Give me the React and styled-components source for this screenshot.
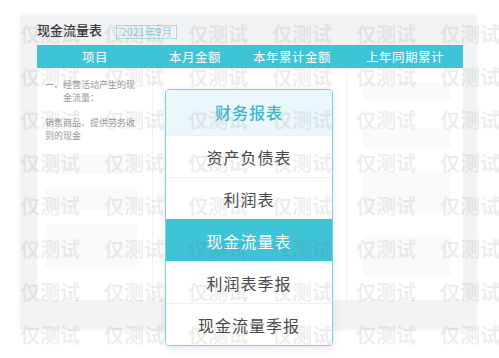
import React from "react";
import styled, { createGlobalStyle } from "styled-components";

const GlobalStyle = createGlobalStyle`
  html, body {
    margin: 0;
    padding: 0;
    background: #ffffff;
  }
  body {
    font-family: "Noto Sans CJK SC", "Noto Sans", sans-serif;
  }
`;

const columns = ["项目", "本月金额", "本年累计金额", "上年同期累计"];
const colWidths = [116, 84, 110, 116];
const menuItems = ["资产负债表", "利润表", "现金流量表", "利润表季报", "现金流量季报"];

const App = () => (
  <Stage>
    <GlobalStyle />
    <Panel>
      <TitleRow>
        <Title>现金流量表</Title>
        <DateBox>2021年9月</DateBox>
      </TitleRow>
      <HeaderBar>
        {columns.map((c, i) => (
          <HeaderCell key={c} $w={colWidths[i]}>
            {c}
          </HeaderCell>
        ))}
      </HeaderBar>
      <Body>
        <Column $w={colWidths[0]}>
          <RowText>一、经营活动产生的现金流量：</RowText>
          <RowText $plain>销售商品、提供劳务收到的现金</RowText>
          <Placeholder $h={20} $mt={12} />
          <Placeholder $h={22} $mt={14} />
          <Placeholder $h={44} $mt={14} />
        </Column>
        <Column $w={colWidths[1]} />
        <Column $w={colWidths[2]} />
        <Column $w={colWidths[3]} $pad="14px 12px 0 16px">
          <Placeholder $h={18} $mt={0} />
          <Placeholder $h={20} $mt={28} />
          <Placeholder $h={40} $mt={24} />
          <Placeholder $h={40} $mt={24} />
        </Column>
      </Body>
    </Panel>

    <Menu>
      <MenuHeader>财务报表</MenuHeader>
      {menuItems.map((m) => (
        <MenuItem key={m} $active={m === "现金流量表"}>
          {m}
        </MenuItem>
      ))}
    </Menu>

    <Watermark>
      {Array.from({ length: 8 }).map((_, r) => (
        <MarkRow key={r}>
          {Array.from({ length: 6 }).map((__, c) => (
            <Mark key={c}>仅测试</Mark>
          ))}
        </MarkRow>
      ))}
    </Watermark>
  </Stage>
);

export default App;

const Stage = styled.div`
  position: relative;
  width: 499px;
  height: 358px;
  overflow: hidden;
  background: #ffffff;
`;

const Panel = styled.div`
  box-sizing: border-box;
  margin: 15px 0 0 20px;
  width: 457px;
  height: 315px;
  padding: 7px 14px 30px 17px;
  background: #f1f3f5;
  display: flex;
  flex-direction: column;
  box-shadow: 0 0 6px rgba(0, 0, 0, 0.04);
`;

const TitleRow = styled.div`
  height: 23px;
  display: flex;
  align-items: flex-start;
  gap: 14px;
`;

const Title = styled.div`
  font-size: 13px;
  line-height: 16px;
  font-weight: 500;
  color: #3a3a3a;
`;

const DateBox = styled.div`
  margin-top: 3px;
  box-sizing: border-box;
  width: 61px;
  height: 14px;
  border: 1px solid #a9dbe6;
  font-size: 10px;
  line-height: 12px;
  color: #8ccbdb;
  text-align: center;
  letter-spacing: 0.5px;
`;

const HeaderBar = styled.div`
  height: 23px;
  background: #3ec3d7;
  display: flex;
`;

const HeaderCell = styled.div`
  width: ${(p) => p.$w}px;
  color: #ffffff;
  font-size: 12.5px;
  line-height: 23px;
  text-align: center;
  letter-spacing: 0.5px;
`;

const Body = styled.div`
  flex: 1;
  background: #ffffff;
  display: flex;
`;

const Column = styled.div`
  box-sizing: border-box;
  width: ${(p) => p.$w}px;
  padding: ${(p) => p.$pad || "10px 15px 0 8px"};
  border-right: 1px solid #f1f2f4;
  display: flex;
  flex-direction: column;
  &:last-child {
    border-right: none;
  }
`;

const RowText = styled.div`
  font-size: 9px;
  line-height: 13px;
  color: #999999;
  padding-left: ${(p) => (p.$plain ? 0 : 18)}px;
  text-indent: ${(p) => (p.$plain ? 0 : -18)}px;
  margin-bottom: ${(p) => (p.$plain ? 0 : 12)}px;
`;

const Placeholder = styled.div`
  height: ${(p) => p.$h}px;
  margin-top: ${(p) => p.$mt}px;
  background: #fafafb;
`;

const Menu = styled.div`
  position: absolute;
  left: 165px;
  top: 89px;
  width: 168px;
  box-sizing: border-box;
  border: 1px solid #7ccfdc;
  border-radius: 4px;
  background: #ffffff;
  overflow: hidden;
  box-shadow: 0 2px 8px rgba(0, 0, 0, 0.1);
`;

const MenuHeader = styled.div`
  height: 45px;
  background: #ebf7fa;
  color: #3cb9cd;
  font-size: 16px;
  font-weight: 500;
  line-height: 45px;
  text-align: center;
  letter-spacing: 1px;
`;

const MenuItem = styled.div`
  height: 42px;
  line-height: 42px;
  text-align: center;
  font-size: 16px;
  letter-spacing: 1px;
  color: ${(p) => (p.$active ? "#ffffff" : "#4a4a4a")};
  background: ${(p) => (p.$active ? "#3ec3d7" : "#ffffff")};
  border-top: 1px solid ${(p) => (p.$active ? "#3ec3d7" : "#f0f0f0")};
  box-sizing: border-box;
`;

const Watermark = styled.div`
  position: absolute;
  inset: 0;
  padding: 12px 0 0 20px;
  pointer-events: none;
  display: flex;
  flex-direction: column;
`;

const MarkRow = styled.div`
  height: 43px;
  display: flex;
  gap: 24px;
  align-items: center;
`;

const Mark = styled.span`
  flex: none;
  width: 60px;
  font-size: 20px;
  font-weight: 700;
  line-height: 22px;
  color: rgba(110, 110, 110, 0.12);
  white-space: nowrap;
`;
